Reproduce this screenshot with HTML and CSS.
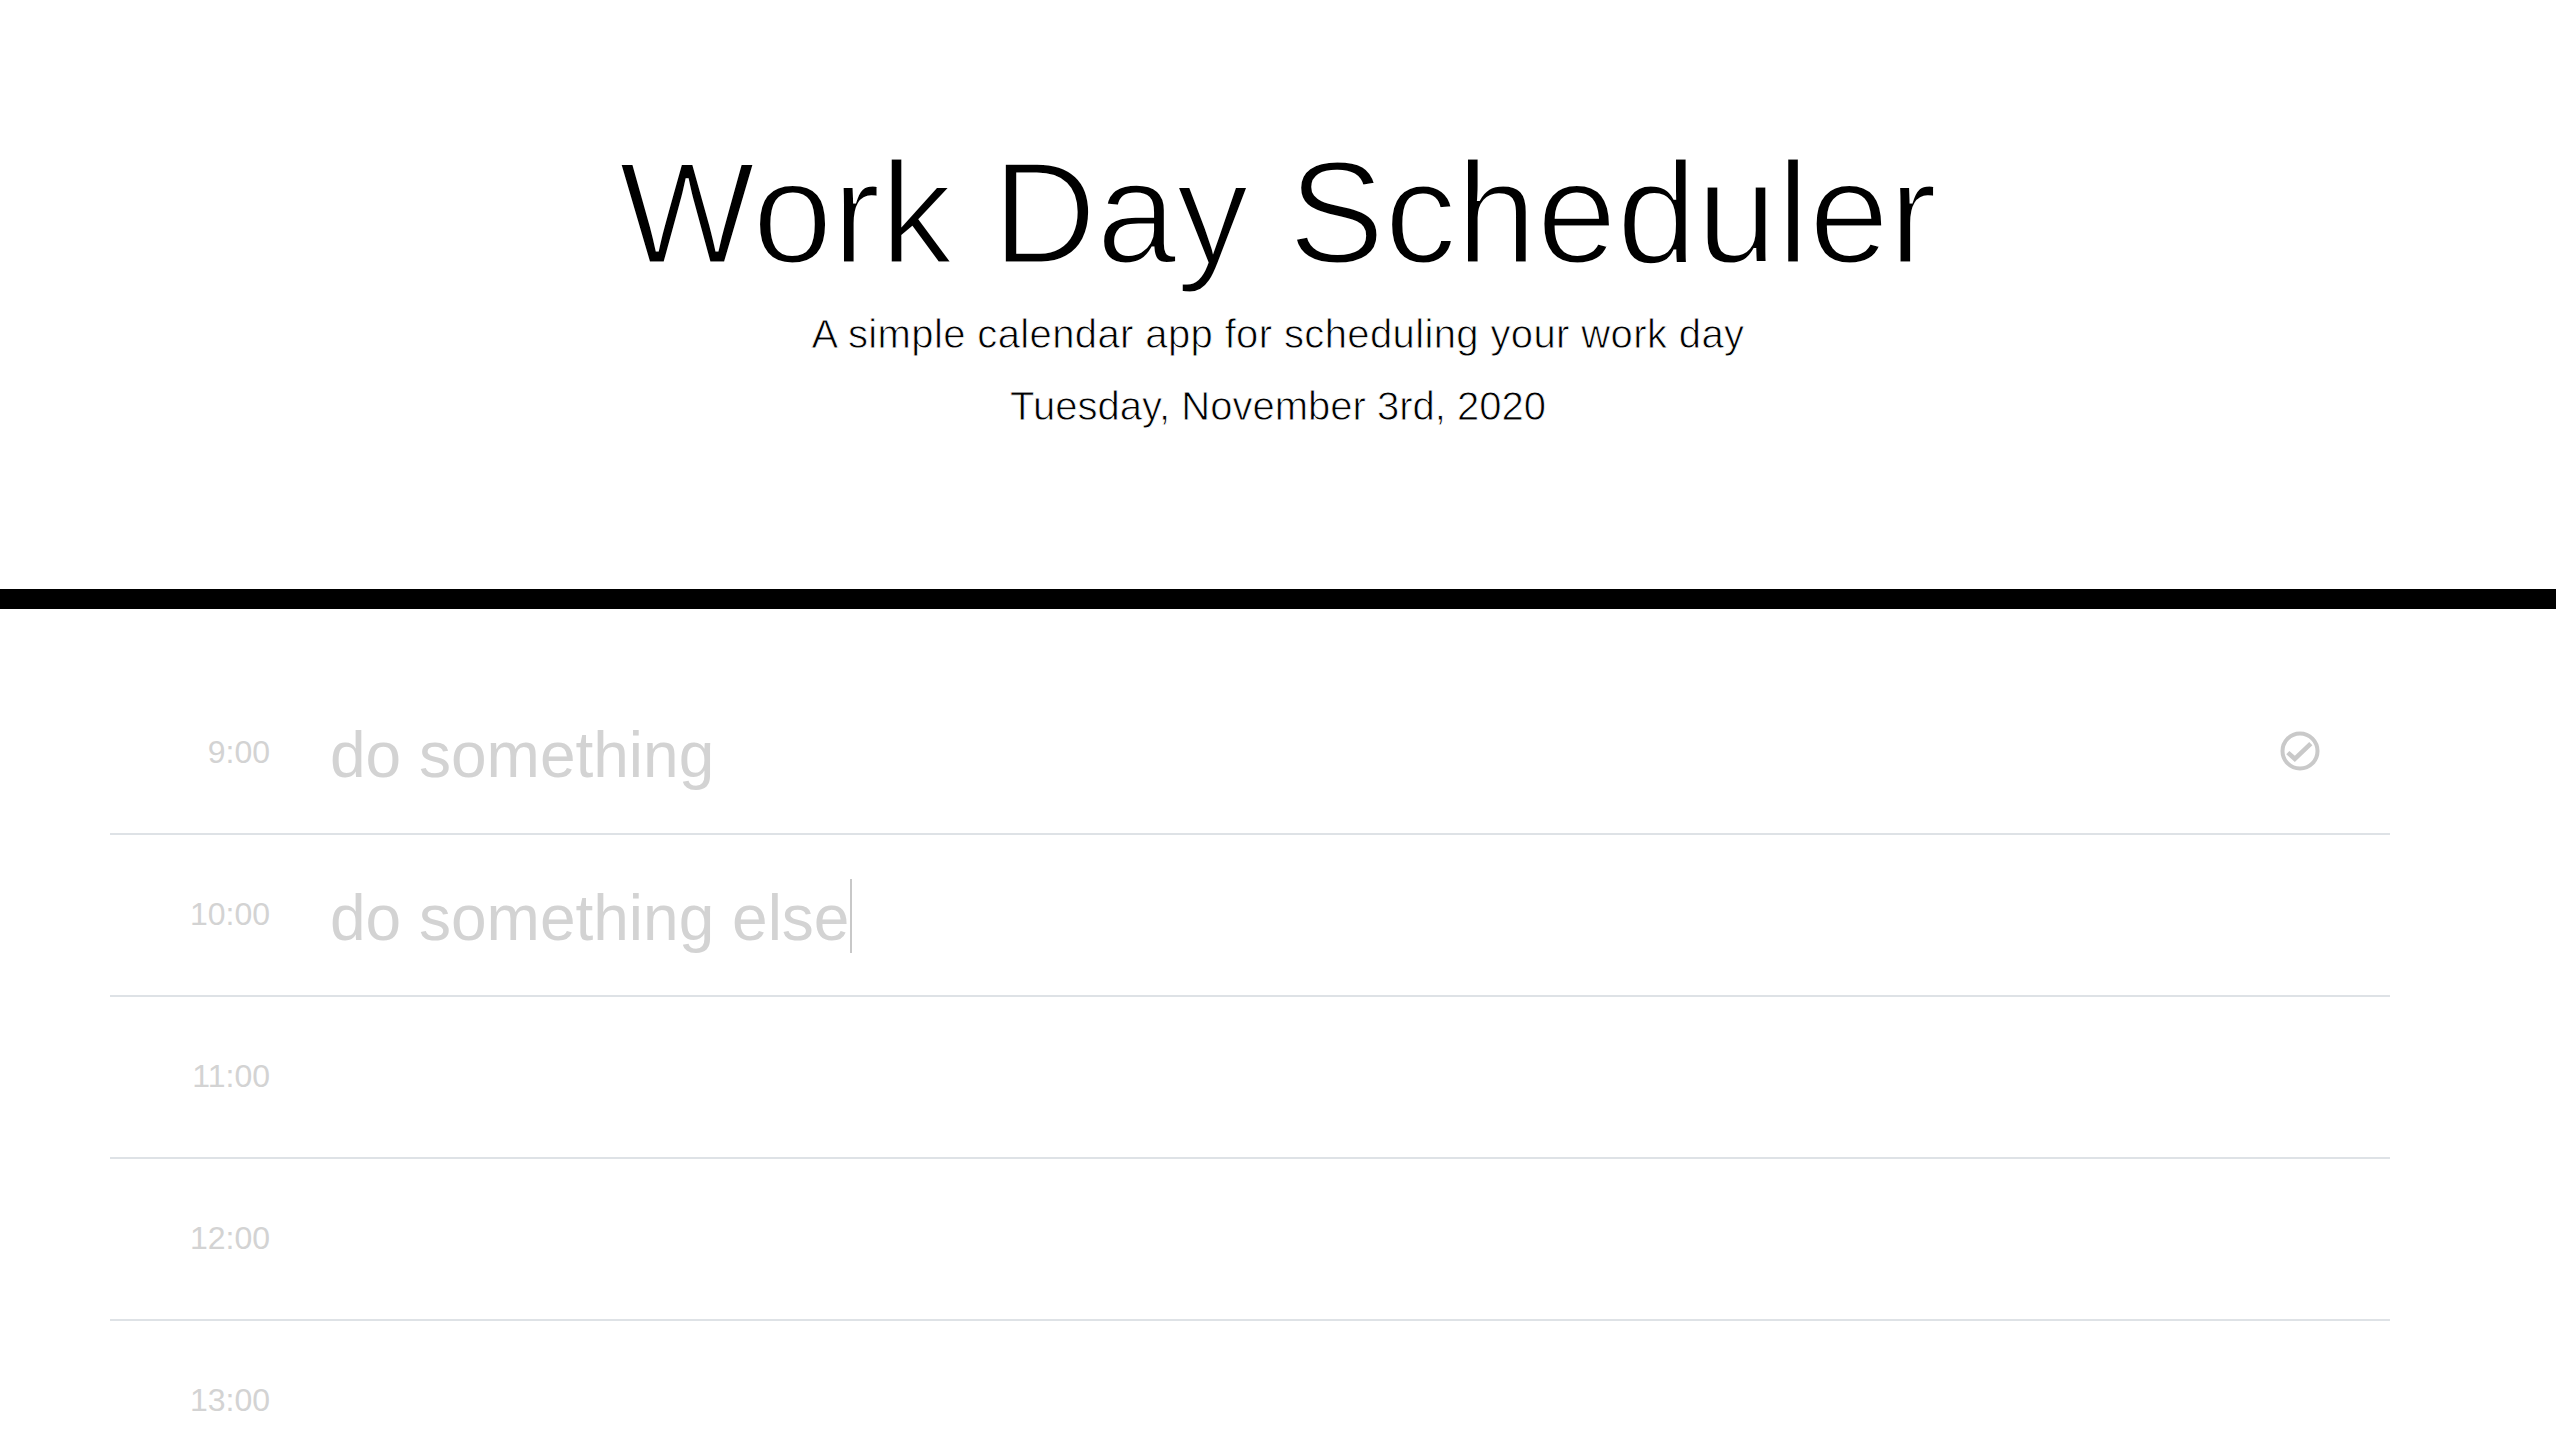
FILE: index.html
```html
<!DOCTYPE html>
<html lang="en">
<head>
<meta charset="UTF-8">
<title>Work Day Scheduler</title>
<link rel="stylesheet" href="styles.css">
</head>
<body>
<header class="jumbotron">
  <h1 class="title">Work Day Scheduler</h1>
  <p class="lead lead-wide">A simple calendar app for scheduling your work day</p>
  <p class="lead lead-date">Tuesday, November 3rd, 2020</p>
</header>
<main class="container">
  <div class="time-block">
    <div class="hour">9:00</div>
    <div class="description">do something</div>
    <div class="save">
      <button class="save-btn" aria-label="Save">
        <svg class="check-icon" viewBox="0 0 40 40" width="40" height="40">
          <circle cx="20" cy="20" r="17.5" fill="none" stroke="#c9c9c9" stroke-width="4"/>
          <polyline points="7.8,21.6 14.8,27.8 30.8,12.6" fill="none" stroke="#c9c9c9" stroke-width="4.6" stroke-linejoin="miter"/>
        </svg>
      </button>
    </div>
  </div>
  <div class="time-block">
    <div class="hour">10:00</div>
    <div class="description">do something else<span class="caret"></span></div>
    <div class="save"></div>
  </div>
  <div class="time-block">
    <div class="hour">11:00</div>
    <div class="description"></div>
    <div class="save"></div>
  </div>
  <div class="time-block">
    <div class="hour">12:00</div>
    <div class="description"></div>
    <div class="save"></div>
  </div>
  <div class="time-block">
    <div class="hour">13:00</div>
    <div class="description"></div>
    <div class="save"></div>
  </div>
  <div class="time-block">
    <div class="hour">14:00</div>
    <div class="description"></div>
    <div class="save"></div>
  </div>
  <div class="time-block">
    <div class="hour">15:00</div>
    <div class="description"></div>
    <div class="save"></div>
  </div>
  <div class="time-block">
    <div class="hour">16:00</div>
    <div class="description"></div>
    <div class="save"></div>
  </div>
  <div class="time-block">
    <div class="hour">17:00</div>
    <div class="description"></div>
    <div class="save"></div>
  </div>
</main>
</body>
</html>
```
FILE: styles.css
```css
* {
  box-sizing: border-box;
}

body {
  margin: 0;
  font-family: "Liberation Sans", Arial, Helvetica, sans-serif;
  color: #000;
  background: #fff;
  line-height: 1;
}

.jumbotron {
  text-align: center;
  padding: 128px 64px;
  border-bottom: 20px solid #000;
  margin-bottom: 64px;
}

.title {
  font-size: 144px;
  line-height: 1.2;
  font-weight: 300;
  margin: 0 0 13px;
  -webkit-text-stroke: 3px #fff;
}

.lead {
  font-size: 40px;
  line-height: 1;
  font-weight: 300;
  margin: 0 0 32px;
  -webkit-text-stroke: 0.8px #fff;
}

.lead-wide {
  letter-spacing: 0.38px;
}

.lead-date {
  margin-bottom: 35px;
}

.container {
  width: 2280px;
  margin-left: 110px;
}

.time-block {
  display: grid;
  grid-template-columns: 190px 1900px 190px;
  align-items: center;
  height: 162px;
  border-bottom: 2px solid #dee2e6;
}

.hour {
  text-align: right;
  padding: 0 30px;
  font-size: 32px;
  line-height: normal;
  color: #d3d3d3;
}

.description {
  padding: 5px 30px 0;
  font-size: 64px;
  line-height: normal;
  color: #d3d3d3;
  white-space: pre-wrap;
}

.caret {
  display: inline-block;
  width: 2px;
  height: 74px;
  margin-left: 1px;
  background: #c8c8c8;
  vertical-align: -13px;
}

.save {
  display: flex;
  justify-content: center;
  padding: 0 30px 4px 40px;
}

.save-btn {
  display: flex;
  padding: 0;
  border: 0;
  background: transparent;
  cursor: pointer;
}

.check-icon {
  display: block;
}
```
